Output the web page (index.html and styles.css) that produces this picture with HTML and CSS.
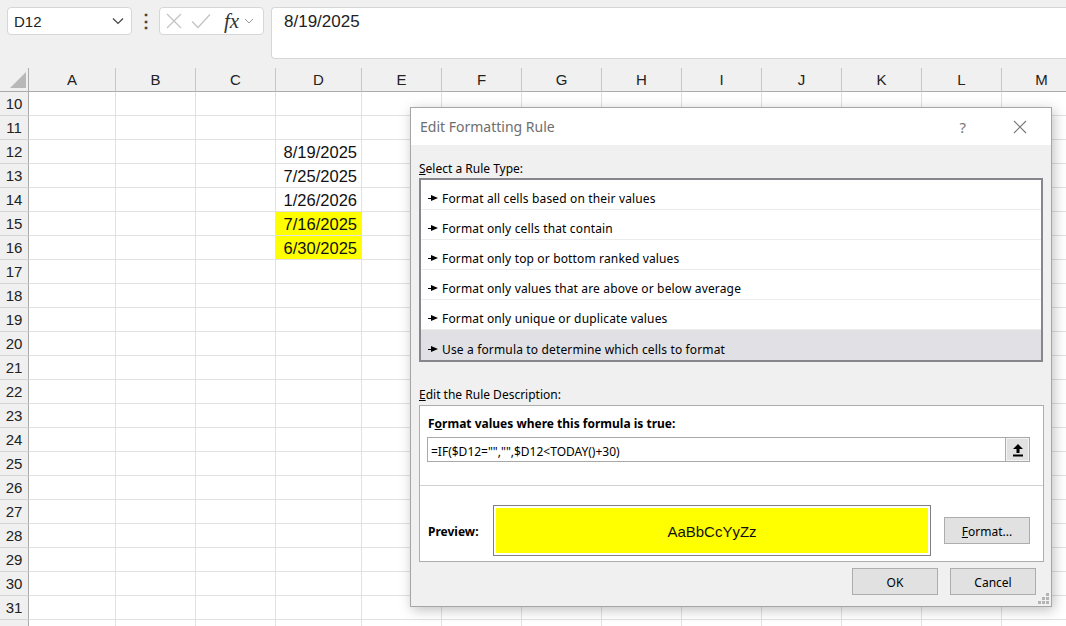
FILE: index.html
```html
<!DOCTYPE html>
<html lang="en">
<head>
    <meta charset="UTF-8">
    <title>Edit Formatting Rule</title>
    <link rel="stylesheet" href="styles.css">
</head>
<body>
    <div class="topbar">
        <div class="namebox">
            <span>D12</span>
            <svg class="chev" width="12" height="8" viewBox="0 0 12 8"><path d="M1 1.5 L6 6.5 L11 1.5" fill="none" stroke="#444" stroke-width="1.2"/></svg>
        </div>
        <div class="dots">⋮</div>
        <div class="fxbox">
            <svg width="16" height="16" viewBox="0 0 16 16"><path d="M1 1 L15 15 M15 1 L1 15" stroke="#c4c4c4" stroke-width="1.3"/></svg>
            <svg class="check" width="20" height="16" viewBox="0 0 20 16"><path d="M1 8.5 L7 14.5 L19 1.5" fill="none" stroke="#c4c4c4" stroke-width="1.3"/></svg>
            <span class="fx">fx</span>
            <svg width="10" height="6" viewBox="0 0 10 6"><path d="M1 1 L5 5 L9 1" fill="none" stroke="#999" stroke-width="1"/></svg>
        </div>
        <div class="formula">8/19/2025</div>
    </div>

    <div class="sheet" id="sheet"></div>

    <div class="dialog">
        <div class="dlg-title">
            <span class="dlg-name">Edit Formatting Rule</span>
            <span class="dlg-help">?</span>
            <svg class="dlg-close" width="14" height="14" viewBox="0 0 14 14"><path d="M1 1 L13 13 M13 1 L1 13" stroke="#777" stroke-width="1.1"/></svg>
        </div>
        <div class="dlg-body">
            <div class="lbl"><u>S</u>elect a Rule Type:</div>
            <ul class="rules">
                <li><i class="ptr"></i>Format all cells based on their values</li>
                <li><i class="ptr"></i>Format only cells that contain</li>
                <li><i class="ptr"></i>Format only top or bottom ranked values</li>
                <li><i class="ptr"></i>Format only values that are above or below average</li>
                <li><i class="ptr"></i>Format only unique or duplicate values</li>
                <li class="selected"><i class="ptr"></i>Use a formula to determine which cells to format</li>
            </ul>

            <div class="lbl lbl-desc"><u>E</u>dit the Rule Description:</div>
            <div class="desc">
                <div class="desc-head">F<u>o</u>rmat values where this formula is true:</div>
                <div class="rule-input">
                    <span>=IF($D12="","",$D12&lt;TODAY()+30)</span>
                    <div class="collapse">
                        <svg width="12" height="14" viewBox="0 0 12 14"><path d="M6 1 L11 6 L7.5 6 L7.5 10 L4.5 10 L4.5 6 L1 6 Z" fill="#000"/><rect x="1" y="11.5" width="10" height="2" fill="#000"/></svg>
                    </div>
                </div>
                <div class="sep"></div>
                <div class="preview-row">
                    <span class="preview-lbl">Preview:</span>
                    <div class="preview-box"><div class="preview-fill">AaBbCcYyZz</div></div>
                    <button class="btn btn-format"><u>F</u>ormat...</button>
                </div>
            </div>
            <div class="actions">
                <button class="btn">OK</button>
                <button class="btn">Cancel</button>
            </div>
        </div>
        <div class="grip">
            <i style="grid-area:1/3"></i>
            <i style="grid-area:2/2"></i><i style="grid-area:2/3"></i>
            <i style="grid-area:3/1"></i><i style="grid-area:3/2"></i><i style="grid-area:3/3"></i>
        </div>
    </div>

    <script>
        const cols = ['A','B','C','D','E','F','G','H','I','J','K','L','M'];
        const values = {12:'8/19/2025', 13:'7/25/2025', 14:'1/26/2026', 15:'7/16/2025', 16:'6/30/2025'};
        const yellow = [15, 16];
        const sheet = document.getElementById('sheet');

        function cell(cls, text) {
            const d = document.createElement('div');
            d.className = cls;
            if (text) d.textContent = text;
            sheet.appendChild(d);
            return d;
        }

        const corner = cell('hd corner');
        corner.innerHTML = '<svg width="16" height="16" viewBox="0 0 16 16"><path d="M16 0 L16 16 L0 16 Z" fill="#b8b8b8"/></svg>';
        cols.forEach(c => cell('hd colhd', c));

        // last row only peeks in at the bottom edge, so no label
        for (let r = 10; r <= 32; r++) {
            cell('hd rowhd', r < 32 ? String(r) : '');
            cols.forEach(c => {
                let cls = 'cell';
                let text = '';
                if (c === 'D' && values[r]) {
                    text = values[r];
                    if (yellow.includes(r)) cls += ' hl';
                }
                cell(cls, text);
            });
        }
    </script>
</body>
</html>
```

FILE: styles.css
```css
body {
    margin: 0;
    background: #fff;
    font-family: "Liberation Sans", Arial, sans-serif;
    color: #222;
    overflow: hidden;
    width: 1066px;
    height: 626px;
}

/* formula bar */
.topbar {
    height: 68px;
    box-sizing: border-box;
    background: #f0f0f0;
    display: flex;
    align-items: flex-start;
    padding: 7px 0 0 7px;
}
.namebox {
    width: 125px;
    height: 28px;
    box-sizing: border-box;
    background: #fff;
    border: 1px solid #d6d6d6;
    border-radius: 4px;
    display: flex;
    align-items: center;
    justify-content: space-between;
    padding: 0 7px 0 6px;
    font-size: 15px;
}
.dots {
    width: 27px;
    text-align: center;
    font-size: 18px;
    font-weight: bold;
    line-height: 28px;
    color: #444;
}
.fxbox {
    width: 105px;
    height: 28px;
    box-sizing: border-box;
    background: #fff;
    border: 1px solid #d6d6d6;
    border-radius: 4px;
    display: flex;
    align-items: center;
    padding: 0 6px 0 6px;
}
.fxbox .check {
    margin-left: 9px;
}
.fx {
    font-family: "Liberation Serif", serif;
    font-style: italic;
    font-size: 21px;
    margin-left: 13px;
    margin-right: 5px;
    color: #333;
    line-height: 1;
}
.formula {
    flex: 1;
    margin-left: 7px;
    height: 52px;
    box-sizing: border-box;
    background: #fff;
    border: 1px solid #d6d6d6;
    border-right: none;
    border-radius: 4px 0 0 4px;
    padding: 4px 0 0 12px;
    font-size: 17px;
    line-height: 20px;
}

/* grid */
.sheet {
    display: grid;
    grid-template-columns: 29px 87px 80px 80px 86px repeat(9, 80px);
    grid-auto-rows: 24px;
    font-size: 15px;
}
.sheet > div {
    box-sizing: border-box;
    border-right: 1px solid #e1e1e1;
    border-bottom: 1px solid #e1e1e1;
    line-height: 24px;
    white-space: nowrap;
    overflow: hidden;
}
.sheet .hd {
    background: #f0f0f0;
    text-align: center;
    color: #222;
}
.sheet .colhd {
    border-bottom: 1px solid #ababab;
    border-right: 1px solid #c6c6c6;
}
.sheet .rowhd {
    border-right: 1px solid #ababab;
    border-bottom: 1px solid #d4d4d4;
}
.sheet .corner {
    border-bottom: 1px solid #ababab;
    border-right: 1px solid #ababab;
    display: flex;
    align-items: flex-end;
    justify-content: flex-end;
    padding: 0 2px 3px 0;
}
.sheet .cell {
    text-align: right;
    padding-right: 4px;
    font-size: 16.5px;
    color: #111;
}
.sheet .hl {
    background: #ffff00;
}

/* dialog */
.dialog {
    position: absolute;
    left: 410px;
    top: 107px;
    width: 642px;
    height: 500px;
    box-sizing: border-box;
    background: #f0f0f0;
    border: 1px solid #a6a6a6;
    box-shadow: 2px 3px 12px rgba(0, 0, 0, 0.25);
    font-family: "Noto Sans", sans-serif;
    font-size: 12px;
    color: #000;
}
.dlg-title {
    height: 37px;
    background: #fff;
    display: flex;
    align-items: center;
    padding-left: 9px;
}
.dlg-name {
    flex: 1;
    font-size: 14px;
    color: #6e6e6e;
}
.dlg-help {
    font-size: 15px;
    color: #777;
    margin-right: 47px;
}
.dlg-close {
    margin-right: 24px;
}
.dlg-body {
    padding: 16px 8px 0 8px;
}
.lbl {
    line-height: 16px;
    margin-bottom: 1px;
}
.lbl-desc {
    margin-top: 25px;
    margin-bottom: 2px;
}
.rules {
    list-style: none;
    margin: 0;
    padding: 0;
    width: 624px;
    box-sizing: border-box;
    border: 2px solid #86878c;
    background: #fff;
    letter-spacing: 0.15px;
}
.rules li {
    height: 30px;
    box-sizing: border-box;
    border-bottom: 1px solid #ececec;
    display: flex;
    align-items: center;
    padding: 8px 0 0 7px;
}
.rules li:last-child {
    border-bottom: none;
}
.rules li.selected {
    background: #e1e1e5;
}
.ptr {
    display: inline-block;
    width: 10px;
    height: 7px;
    margin-right: 4px;
    background:
        linear-gradient(#000, #000) 0 3px / 4px 1px no-repeat;
    position: relative;
}
.ptr::after {
    content: "";
    position: absolute;
    left: 3px;
    top: 0;
    border-left: 7px solid #000;
    border-top: 3.5px solid transparent;
    border-bottom: 3.5px solid transparent;
}
.desc {
    width: 625px;
    height: 157px;
    box-sizing: border-box;
    border: 1px solid #adadad;
    background: #fff;
}
.desc-head {
    font-weight: bold;
    padding: 10px 0 0 8px;
    line-height: 16px;
}
.rule-input {
    margin: 5px 13px 0 7px;
    height: 25px;
    box-sizing: border-box;
    border: 1px solid #a8a8a8;
    display: flex;
    align-items: center;
    justify-content: space-between;
    padding-left: 3px;
}
.rule-input span {
    padding-top: 3px;
}
.collapse {
    width: 24px;
    height: 23px;
    box-sizing: border-box;
    background: #e1e1e1;
    border-left: 1px solid #adadad;
    box-shadow: inset 0 0 0 1px #f4f4f4;
    display: flex;
    align-items: center;
    justify-content: center;
}
.sep {
    height: 1px;
    background: #d2d2d2;
    margin-top: 23px;
}
.preview-row {
    display: flex;
    align-items: center;
    padding-left: 8px;
    margin-top: 19px;
}
.preview-lbl {
    font-weight: bold;
    width: 65px;
    padding-top: 2px;
}
.preview-box {
    width: 438px;
    height: 51px;
    box-sizing: border-box;
    border: 1px solid #7f7f7f;
    padding: 2px;
}
.preview-fill {
    height: 100%;
    background: #ffff00;
    display: flex;
    align-items: center;
    justify-content: center;
    font-family: "Liberation Sans", Arial, sans-serif;
    font-size: 15px;
    color: #111;
    padding-top: 2px;
    box-sizing: border-box;
}
.btn {
    width: 86px;
    height: 27px;
    background: #e1e1e1;
    border: 1px solid #adadad;
    font-family: "Noto Sans", sans-serif;
    font-size: 12px;
    color: #000;
    padding: 2px 0 0 0;
}
.btn-format {
    margin-left: 13px;
}
.actions {
    display: flex;
    justify-content: flex-end;
    gap: 12px;
    margin-top: 6px;
    padding-right: 7px;
}
.grip {
    position: absolute;
    right: 2px;
    bottom: 2px;
    display: grid;
    grid-template-columns: repeat(3, 3px);
    grid-template-rows: repeat(3, 3px);
    gap: 1px;
}
.grip i {
    background: #b4b4b4;
}
```
